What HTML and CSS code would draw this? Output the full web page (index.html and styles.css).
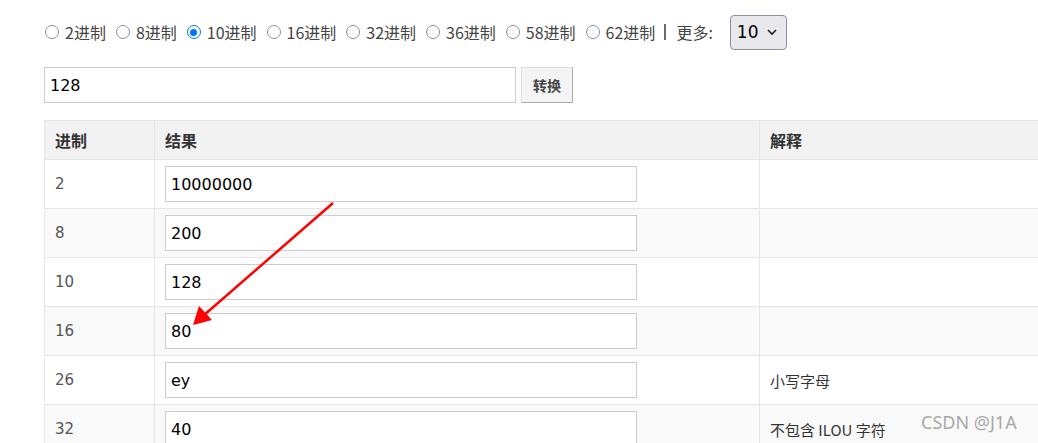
FILE: index.html
```html
<!DOCTYPE html>
<html>
<head>
<meta charset="utf-8">
<link rel="stylesheet" href="styles.css">
</head>
<body>
<div class="page">
  <div class="radios">
    <label class="opt"><span class="rd"></span>2进制</label>
    <label class="opt"><span class="rd"></span>8进制</label>
    <label class="opt"><span class="rd on"></span>10进制</label>
    <label class="opt"><span class="rd"></span>16进制</label>
    <label class="opt"><span class="rd"></span>32进制</label>
    <label class="opt"><span class="rd"></span>36进制</label>
    <label class="opt"><span class="rd"></span>58进制</label>
    <label class="opt"><span class="rd"></span>62进制</label>
    <span class="sep"></span>
    <span class="more">更多:</span>
    <span class="select">10 <svg width="12" height="8" viewBox="0 0 12 8"><path d="M2 2 L6 6 L10 2" fill="none" stroke="#222" stroke-width="1.6"/></svg></span>
  </div>
  <div class="inputrow">
    <div class="bigin">128</div>
    <div class="btn">转换</div>
  </div>
  <table class="tbl">
    <colgroup><col class="c1"><col class="c2"><col class="c3"></colgroup>
    <thead><tr><th>进制</th><th>结果</th><th>解释</th></tr></thead>
    <tbody>
      <tr><td>2</td><td><div class="val">10000000</div></td><td></td></tr>
      <tr><td>8</td><td><div class="val">200</div></td><td></td></tr>
      <tr><td>10</td><td><div class="val">128</div></td><td></td></tr>
      <tr><td>16</td><td><div class="val">80</div></td><td></td></tr>
      <tr><td>26</td><td><div class="val">ey</div></td><td class="desc">小写字母</td></tr>
      <tr><td>32</td><td><div class="val">40</div></td><td class="desc">不包含 ILOU 字符</td></tr>
    </tbody>
  </table>
</div>
<svg class="arrow" width="1038" height="443" viewBox="0 0 1038 443">
  <line x1="333" y1="203" x2="203" y2="316" stroke="#f00" stroke-width="2.5"/>
  <polygon points="193,325 199,306 212,320" fill="#f00"/>
</svg>
<div class="mark">CSDN @J1A</div>
</body>
</html>
```
FILE: styles.css
```css
html, body {
  margin: 0;
  padding: 0;
  overflow: hidden;
  background: #fff;
}
body {
  width: 1038px;
  height: 443px;
  position: relative;
  font-family: "Noto Sans CJK SC", "Noto Sans", sans-serif;
  color: #333;
}
.page {
  padding: 14px 0 0 44px;
}
.radios {
  display: flex;
  align-items: center;
  height: 36px;
  font-size: 16px;
  color: #444;
}
.opt {
  display: flex;
  align-items: center;
  margin-right: 9px;
}
.rd {
  box-sizing: border-box;
  width: 14px;
  height: 14px;
  border: 1.5px solid #8f8f9d;
  border-radius: 50%;
  margin: 0 6px 0 1px;
  background: #fff;
  display: flex;
  align-items: center;
  justify-content: center;
}
.rd.on {
  border-color: #0075ff;
}
.rd.on::after {
  content: "";
  width: 7px;
  height: 7px;
  border-radius: 50%;
  background: #0075ff;
}
.sep {
  width: 2px;
  height: 16px;
  background: #6a6a7a;
  margin: 0 10px 0 0;
}
.more {
  margin-right: 17px;
}
.select {
  display: flex;
  align-items: center;
  gap: 8px;
  box-sizing: border-box;
  width: 57px;
  height: 35px;
  padding: 0 0 0 6px;
  border: 1px solid #8f8f9d;
  border-radius: 4px;
  background: #e9e9ed;
  font-family: "DejaVu Sans", sans-serif;
  font-size: 17px;
  color: #000;
}
.inputrow {
  display: flex;
  gap: 5px;
  margin-top: 17px;
  height: 36px;
}
.bigin {
  box-sizing: border-box;
  width: 472px;
  height: 36px;
  border: 1px solid #ccc;
  padding: 0 5px;
  display: flex;
  align-items: center;
  font-family: "DejaVu Sans", sans-serif;
  font-size: 16px;
  color: #000;
}
.btn {
  box-sizing: border-box;
  width: 52px;
  height: 36px;
  border: 1px solid #ddd;
  border-right-color: #aaa;
  border-bottom-color: #aaa;
  background: #f4f4f4;
  display: flex;
  align-items: center;
  justify-content: center;
  font-size: 14px;
  font-weight: 700;
  color: #444;
}
.tbl {
  margin-top: 17px;
  border-collapse: collapse;
  width: 1100px;
  table-layout: fixed;
}
.c1 { width: 110px; }
.c2 { width: 605px; }
.c3 { width: 385px; }
.tbl th, .tbl td {
  border: 1px solid #e6e6e6;
  text-align: left;
  padding: 6px 10px;
}
.tbl th {
  background: #f2f2f2;
  height: 26px;
  font-size: 16px;
  font-weight: 700;
  color: #333;
}
.tbl td {
  height: 36px;
  font-family: "DejaVu Sans", sans-serif;
  font-size: 15px;
  color: #555;
}
.tbl tbody tr:nth-child(even) td {
  background: #f9f9f9;
}
.tbl td.desc {
  font-family: "Noto Sans CJK SC", sans-serif;
  font-size: 15px;
  color: #333;
}
.val {
  box-sizing: border-box;
  width: 472px;
  height: 36px;
  border: 1px solid #ccc;
  background: #fff;
  padding: 0 5px;
  display: flex;
  align-items: center;
  font-family: "DejaVu Sans", sans-serif;
  font-size: 16px;
  color: #000;
}
.arrow {
  position: absolute;
  left: 0;
  top: 0;
  pointer-events: none;
}
.mark {
  position: absolute;
  left: 921px;
  top: 410px;
  font-family: "Noto Sans", sans-serif;
  font-size: 18px;
  color: rgba(140, 140, 140, 0.75);
}
```
